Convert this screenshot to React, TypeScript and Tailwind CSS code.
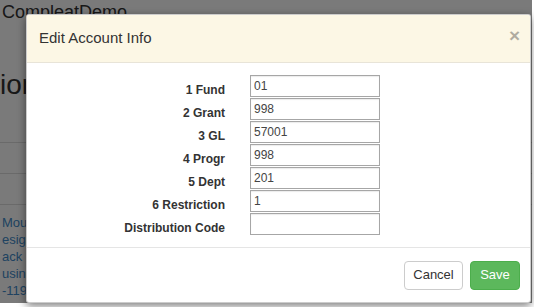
import React from "react";

const fields = [
  { label: "1 Fund", value: "01" },
  { label: "2 Grant", value: "998" },
  { label: "3 GL", value: "57001" },
  { label: "4 Progr", value: "998" },
  { label: "5 Dept", value: "201" },
  { label: "6 Restriction", value: "1" },
  { label: "Distribution Code", value: "" },
];

function BackgroundPage() {
  return (
    <div className="w-full h-full bg-white text-[#333]">
      {/* navbar brand */}
      <div className="h-[38px] pl-[2px] pt-px text-[18px] leading-[22px]">CompleatDemo</div>
      {/* page heading, cut off at the left */}
      <h1 className="mt-[32px] text-[28px] leading-[30px] whitespace-nowrap">ion Details</h1>
      {/* table rows */}
      <div className="mt-[13px]">
        <div className="h-[30px] border-b border-[#ddd]" />
        <div className="h-[31px] border-b border-[#ddd]" />
        <div className="h-[31px] border-b border-[#ddd]" />
      </div>
      <div className="mt-[9px] pl-[2px] text-[13px] leading-[17px] text-[#428bca] whitespace-nowrap">
        <div>Mouse</div>
        <div>esign</div>
        <div>ack</div>
        <div>usiness</div>
        <div>-1195</div>
      </div>
    </div>
  );
}

function EditAccountModal() {
  return (
    <div className="absolute left-[26px] top-[14px] w-[505px] bg-white rounded-[3px] overflow-hidden border border-black/20 shadow-[0_3px_9px_rgba(0,0,0,0.5)]">
      {/* Header */}
      <div className="h-[48px] flex items-center justify-between pl-[12px] pr-[10px] bg-[#fcf7e5] border-b border-[#e8e4d8]">
        <h4 className="text-[15px] text-[#333]">Edit Account Info</h4>
        <button className="text-[19px] font-bold leading-none text-black opacity-30 -mt-[6px]">×</button>
      </div>

      {/* Body */}
      <div className="pt-[12px] pb-[11px]">
        <div className="grid grid-cols-[198px_130px] gap-x-[25px]">
          {fields.map((f) => (
            <React.Fragment key={f.label}>
              <label className="text-right text-[12px] font-bold leading-[16px] pt-[7px] text-[#333]">
                {f.label}
              </label>
              <input
                defaultValue={f.value}
                className="h-[22px] w-[130px] border border-[#a6a6a6] shadow-[inset_0_1px_1px_rgba(0,0,0,0.08)] px-[3px] text-[12px] text-[#444] outline-none"
              />
            </React.Fragment>
          ))}
        </div>
      </div>

      {/* Footer */}
      <div className="border-t border-[#e5e5e5] h-[55px] flex items-center justify-end gap-[7px] pr-[10px]">
        <button className="h-[29px] w-[59px] rounded-[4px] border border-[#ccc] bg-white text-[13px] text-[#333]">
          Cancel
        </button>
        <button className="h-[29px] w-[50px] rounded-[4px] border border-[#4cae4c] bg-[#5cb85c] text-[13px] text-white">
          Save
        </button>
      </div>
    </div>
  );
}

export default function App() {
  return (
    <div className="relative w-[534px] h-[307px] overflow-hidden bg-white font-['Liberation_Sans',Arial,sans-serif]">
      <div className="relative w-[532px] h-[303px] overflow-hidden">
        <BackgroundPage />
        <div className="absolute inset-0 bg-black/[0.52]" />
      </div>
      <EditAccountModal />
    </div>
  );
}
